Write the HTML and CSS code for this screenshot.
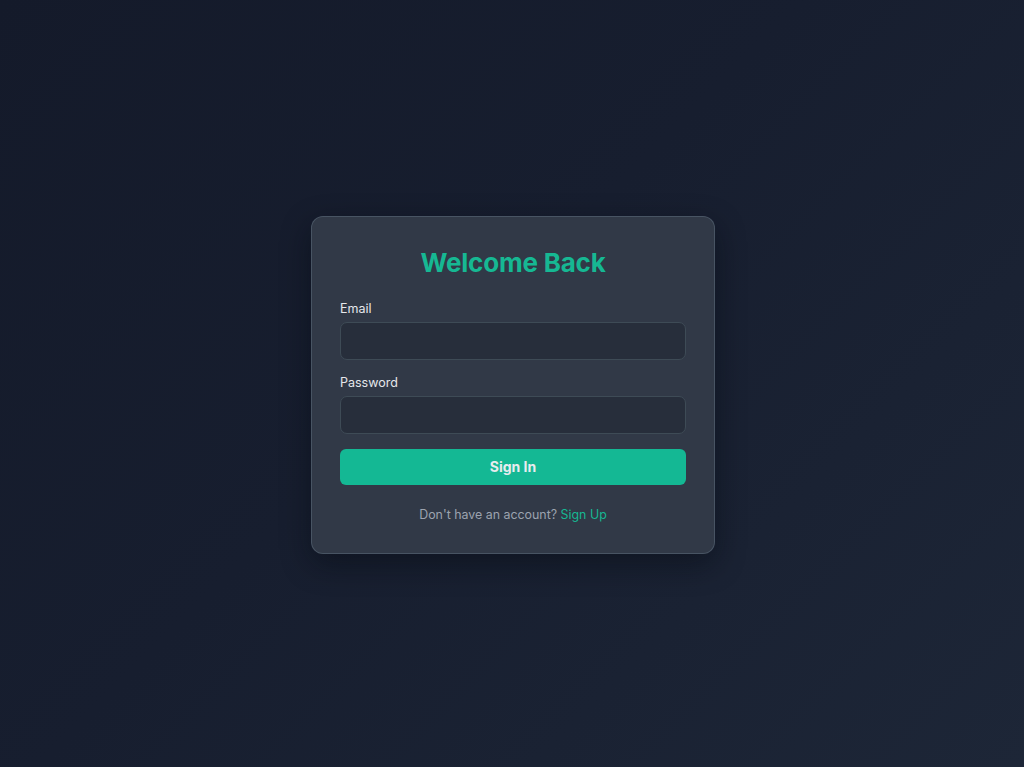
FILE: index.html
```html
<!DOCTYPE html>
<html lang="en">
<head>
<meta charset="utf-8">
<title>Welcome Back</title>
<link rel="stylesheet" href="styles.css">
</head>
<body>
<main class="page">
  <form class="card">
    <h1 class="title">Welcome Back</h1>
    <div class="field">
      <label class="label" for="email">Email</label>
      <input class="input" id="email" type="email">
    </div>
    <div class="field">
      <label class="label" for="password">Password</label>
      <input class="input" id="password" type="password">
    </div>
    <button class="btn" type="button">Sign In</button>
    <p class="footer">Don't have an account? <a class="link" href="#">Sign Up</a></p>
  </form>
</main>
</body>
</html>
```

FILE: styles.css
```css
* { box-sizing: border-box; }
html, body { margin: 0; height: 100%; }
body {
  font-family: Inter, "Noto Sans", "Liberation Sans", sans-serif;
  background: linear-gradient(135deg, #141a2a 0%, #171e2f 45%, #1d2637 100%);
  color: #e5e7eb;
}
.page {
  min-height: 100vh;
  display: flex;
  align-items: center;
  justify-content: center;
  padding: 2px 0 0 2px;
}
.card {
  width: 404px;
  padding: 28px;
  background: #313947;
  border: 1px solid rgba(110, 130, 145, 0.38);
  border-radius: 12px;
  box-shadow: 0 10px 30px rgba(5, 8, 16, 0.45);
  display: flex;
  flex-direction: column;
}
.title {
  margin: 2px 0 21px;
  font-size: 26px;
  line-height: 32px;
  font-weight: 700;
  text-align: center;
  color: #16b893;
  letter-spacing: -0.2px;
}
.field {
  display: flex;
  flex-direction: column;
  gap: 4px;
  margin-bottom: 14px;
}
.label {
  font-size: 12.5px;
  line-height: 18px;
  color: #e5e7eb;
}
.input {
  height: 38px;
  width: 100%;
  background: #272e3b;
  border: 1px solid #3e4b56;
  border-radius: 7px;
  outline: none;
  color: #e5e7eb;
  font: inherit;
  padding: 0 12px;
}
.btn {
  margin-top: 1px;
  height: 36px;
  border: none;
  border-radius: 6px;
  background: #14b894;
  color: #e8ecef;
  font-family: inherit;
  font-size: 14px;
  font-weight: 700;
  cursor: pointer;
}
.footer {
  margin: 20px 0 0;
  font-size: 12.4px;
  line-height: 20px;
  text-align: center;
  color: #9ca3af;
}
.link {
  color: #16b893;
  text-decoration: none;
}
```
